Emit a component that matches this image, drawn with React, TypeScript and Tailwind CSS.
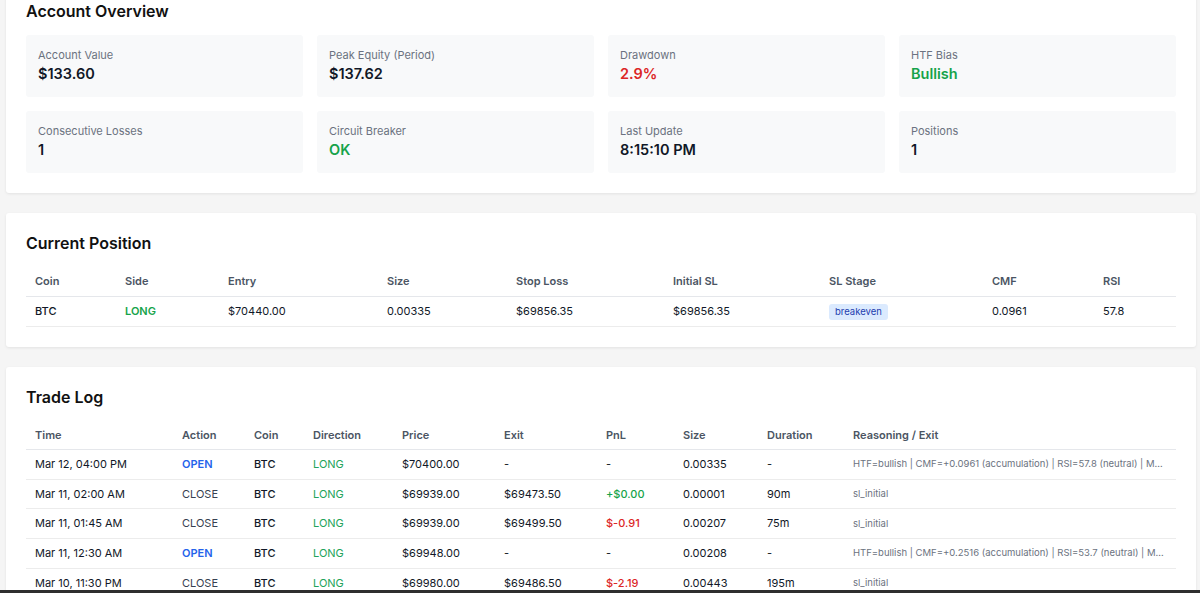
import React from 'react';
import { twMerge } from 'tailwind-merge';

const font = { fontFamily: 'Inter, "Noto Sans", sans-serif' };

interface Stat {
  label: string;
  value: string;
  tone?: 'green' | 'red';
}

const stats: Stat[] = [
  { label: 'Account Value', value: '$133.60' },
  { label: 'Peak Equity (Period)', value: '$137.62' },
  { label: 'Drawdown', value: '2.9%', tone: 'red' },
  { label: 'HTF Bias', value: 'Bullish', tone: 'green' },
  { label: 'Consecutive Losses', value: '1' },
  { label: 'Circuit Breaker', value: 'OK', tone: 'green' },
  { label: 'Last Update', value: '8:15:10 PM' },
  { label: 'Positions', value: '1' },
];

interface Trade {
  time: string;
  action: 'OPEN' | 'CLOSE';
  price: string;
  exit: string;
  pnl: string;
  pnlTone?: 'green' | 'red';
  size: string;
  duration: string;
  reason: string;
}

const trades: Trade[] = [
  { time: 'Mar 12, 04:00 PM', action: 'OPEN', price: '$70400.00', exit: '-', pnl: '-', size: '0.00335', duration: '-', reason: 'HTF=bullish | CMF=+0.0961 (accumulation) | RSI=57.8 (neutral) | MACD=bullish crossover' },
  { time: 'Mar 11, 02:00 AM', action: 'CLOSE', price: '$69939.00', exit: '$69473.50', pnl: '+$0.00', pnlTone: 'green', size: '0.00001', duration: '90m', reason: 'sl_initial' },
  { time: 'Mar 11, 01:45 AM', action: 'CLOSE', price: '$69939.00', exit: '$69499.50', pnl: '$-0.91', pnlTone: 'red', size: '0.00207', duration: '75m', reason: 'sl_initial' },
  { time: 'Mar 11, 12:30 AM', action: 'OPEN', price: '$69948.00', exit: '-', pnl: '-', size: '0.00208', duration: '-', reason: 'HTF=bullish | CMF=+0.2516 (accumulation) | RSI=53.7 (neutral) | MACD=bullish crossover' },
  { time: 'Mar 10, 11:30 PM', action: 'CLOSE', price: '$69980.00', exit: '$69486.50', pnl: '$-2.19', pnlTone: 'red', size: '0.00443', duration: '195m', reason: 'sl_initial' },
];

function Card({ title, children }: { title: string; children: React.ReactNode }) {
  return (
    <section className="bg-white rounded-[3px] shadow-[0_1px_3px_rgba(0,0,0,0.08)] p-5">
      <h2 className="text-[16px] leading-5 font-semibold text-[#111] mb-[14px]">{title}</h2>
      {children}
    </section>
  );
}

const th = 'text-left font-semibold text-[11px] leading-[16.6px] text-[#4b5563] px-[9px] py-[6px] border-b border-[#e5e7eb]';
const td = (extra = '') =>
  twMerge('text-[11px] leading-[16.6px] text-[#111827] px-[9px] py-[6px] border-b border-[#ececec] whitespace-nowrap', extra);

export default function App() {
  return (
    <div className="min-h-screen bg-[#f5f5f5] overflow-hidden" style={font}>
      <div className="flex flex-col gap-5 pl-[6px] pr-1 -mt-[19px]">
        {/* Account overview */}
        <Card title="Account Overview">
          <div className="grid grid-cols-4 gap-[14px]">
            {stats.map((s) => (
              <div key={s.label} className="bg-[#f8f9fa] rounded-[3px] px-3 pt-[12px] pb-[13px]">
                <div className="text-[11px] leading-[16px] text-[#6b7280]">{s.label}</div>
                <div
                  className={twMerge(
                    'text-[14.5px] leading-[20px] font-semibold text-[#111827] mt-[1px]',
                    s.tone === 'green' && 'text-[#16a34a]',
                    s.tone === 'red' && 'text-[#dc2626]'
                  )}
                >
                  {s.value}
                </div>
              </div>
            ))}
          </div>
        </Card>

        {/* Current position */}
        <Card title="Current Position">
          <table className="w-full table-fixed border-collapse">
            <colgroup>
              <col className="w-[90px]" />
              <col className="w-[103px]" />
              <col className="w-[159px]" />
              <col className="w-[129px]" />
              <col className="w-[157px]" />
              <col className="w-[156px]" />
              <col className="w-[163px]" />
              <col className="w-[111px]" />
              <col />
            </colgroup>
            <thead>
              <tr>
                {['Coin', 'Side', 'Entry', 'Size', 'Stop Loss', 'Initial SL', 'SL Stage', 'CMF', 'RSI'].map((h) => (
                  <th key={h} className={th}>{h}</th>
                ))}
              </tr>
            </thead>
            <tbody>
              <tr>
                <td className={td('font-medium')}>BTC</td>
                <td className={td('font-semibold text-[#16a34a]')}>LONG</td>
                <td className={td()}>$70440.00</td>
                <td className={td()}>0.00335</td>
                <td className={td()}>$69856.35</td>
                <td className={td()}>$69856.35</td>
                <td className={td()}>
                  <span className="inline-block align-middle bg-[#dbeafe] text-[#1e40af] text-[9.5px] leading-[12px] px-[6px] py-[2px] rounded-[3px]">breakeven</span>
                </td>
                <td className={td()}>0.0961</td>
                <td className={td()}>57.8</td>
              </tr>
            </tbody>
          </table>
        </Card>

        {/* Trade log */}
        <Card title="Trade Log">
          <table className="w-full table-fixed border-collapse">
            <colgroup>
              <col className="w-[147px]" />
              <col className="w-[72px]" />
              <col className="w-[59px]" />
              <col className="w-[89px]" />
              <col className="w-[102px]" />
              <col className="w-[102px]" />
              <col className="w-[77px]" />
              <col className="w-[84px]" />
              <col className="w-[86px]" />
              <col />
            </colgroup>
            <thead>
              <tr>
                {['Time', 'Action', 'Coin', 'Direction', 'Price', 'Exit', 'PnL', 'Size', 'Duration', 'Reasoning / Exit'].map((h) => (
                  <th key={h} className={th}>{h}</th>
                ))}
              </tr>
            </thead>
            <tbody>
              {trades.map((t) => (
                <tr key={t.time}>
                  <td className={td()}>{t.time}</td>
                  <td className={td(t.action === 'OPEN' ? 'font-semibold text-[#2563eb]' : 'text-[#374151]')}>{t.action}</td>
                  <td className={td('font-medium')}>BTC</td>
                  <td className={td('text-[#22a35a]')}>LONG</td>
                  <td className={td()}>{t.price}</td>
                  <td className={td()}>{t.exit}</td>
                  <td
                    className={td(
                      t.pnlTone === 'green' ? 'font-medium text-[#16a34a]' : t.pnlTone === 'red' ? 'font-medium text-[#dc2626]' : ''
                    )}
                  >
                    {t.pnl}
                  </td>
                  <td className={td()}>{t.size}</td>
                  <td className={td()}>{t.duration}</td>
                  <td className={td('text-[9.5px] text-[#6b7280] overflow-hidden text-ellipsis')}>{t.reason}</td>
                </tr>
              ))}
            </tbody>
          </table>
        </Card>
      </div>

      {/* window edge strip at the bottom of the capture */}
      <div className="fixed bottom-0 left-0 right-0 h-[3px] bg-[#2e2e2e]" />
    </div>
  );
}
